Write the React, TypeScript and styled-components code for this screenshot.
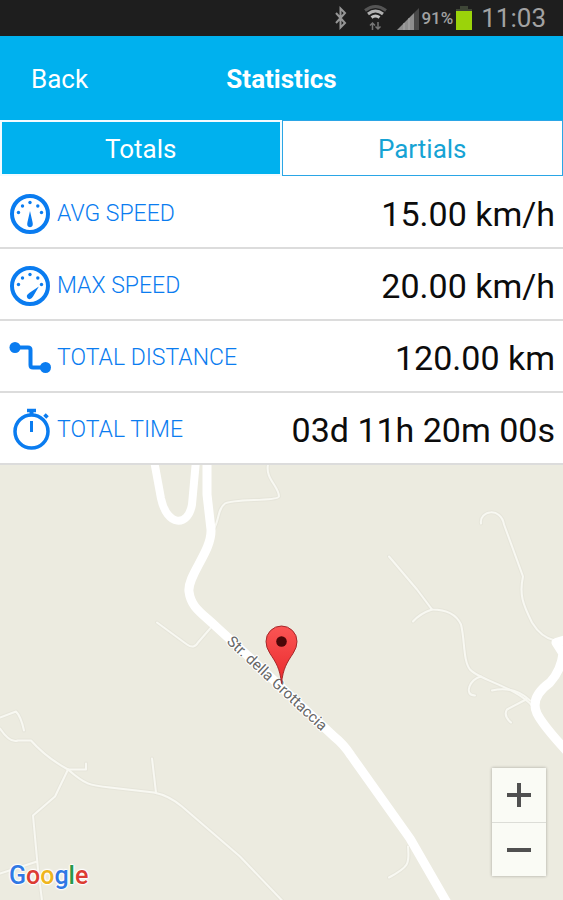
import React, { useState } from "react";
import styled, { createGlobalStyle } from "styled-components";

const SKY = "#00b1ee";
const BLUE = "#0a7cf0";

const GlobalStyle = createGlobalStyle`
  *, *::before, *::after { box-sizing: border-box; }
  html, body, #root { height: 100%; }
  body { margin: 0; font-family: Roboto, "Noto Sans", sans-serif; background: #fff; }
  button { font: inherit; margin: 0; padding: 0; border: 0; cursor: pointer; }
`;

const Screen = styled.div`
  display: flex;
  flex-direction: column;
  min-height: 100%;
`;

const StatusBar = styled.div`
  display: flex;
  align-items: center;
  justify-content: flex-end;
  height: 36px;
  padding-right: 17px;
  background: #1e1e1e;
  color: #a2a2a2;
`;

const StatusIcons = styled.svg`
  display: block;
  width: 92px;
  height: 36px;
`;

const Percent = styled.span`
  font-size: 17px;
  line-height: 36px;
  font-weight: 500;
  margin-left: 2px;
`;

const Battery = styled.svg`
  display: block;
  width: 18px;
  height: 36px;
  margin-left: 2px;
`;

const Clock = styled.time`
  font-size: 26px;
  line-height: 36px;
  margin-left: 8px;
`;

const Header = styled.header`
  display: grid;
  grid-template-columns: 1fr auto 1fr;
  align-items: center;
  height: 84px;
  padding: 2px 31px 0;
  background: ${SKY};
  color: #fff;
`;

const BackButton = styled.button`
  justify-self: start;
  background: none;
  color: #fff;
  font-size: 26px;
  line-height: 32px;
`;

const Title = styled.h1`
  margin: 0;
  font-size: 26px;
  line-height: 32px;
  font-weight: 700;
`;

const Tabs = styled.div`
  display: grid;
  grid-template-columns: 1fr 1fr;
  height: 56px;
  margin-bottom: 1px;
`;

const Tab = styled.button<{ $active: boolean }>`
  font-size: 26px;
  line-height: 32px;
  padding-top: 2px;
  background: ${(p) => (p.$active ? SKY : "#fff")};
  color: ${(p) => (p.$active ? "#fff" : "#16a3d4")};
  border: ${(p) => (p.$active ? "2px solid #f2fbff" : "1px solid #2aa6e6")};
  outline-offset: -4px;
`;

const StatList = styled.dl`
  margin: 0;
`;

const StatRow = styled.div`
  display: flex;
  align-items: center;
  justify-content: space-between;
  height: 72px;
  padding: 3px 8px 0;
  border-bottom: 2px solid #dcdcdc;
  background: #fff;
`;

const StatLabel = styled.dt`
  display: flex;
  align-items: center;
  gap: 5px;
  color: ${BLUE};
  font-size: 23px;
  line-height: 28px;
  font-weight: 300;
`;

const StatIcon = styled.svg`
  display: block;
  width: 44px;
  height: 44px;
`;

const StatValue = styled.dd`
  margin: 0;
  color: #0c0c0c;
  font-size: 34px;
  line-height: 40px;
`;

const MapArea = styled.section`
  position: relative;
  flex: 1 1 auto;
  min-height: 400px;
  background: #ecebe0;
  overflow: hidden;
`;

const MapDrawing = styled.svg`
  position: absolute;
  inset: 0;
  width: 100%;
  height: 100%;
`;

const ZoomControl = styled.div`
  position: absolute;
  right: 17px;
  bottom: 24px;
  display: grid;
  grid-template-rows: 1fr 1fr;
  width: 54px;
  height: 108px;
  background: #fafbf5;
  box-shadow: 0 0 3px rgba(0, 0, 0, 0.3);
`;

const ZoomButton = styled.button`
  display: grid;
  place-items: center;
  background: none;
  & + & { border-top: 1px solid #dcddd7; }
`;

const Wordmark = styled.a`
  position: absolute;
  left: 9px;
  bottom: 8px;
  font-size: 25px;
  line-height: 32px;
  font-weight: 500;
  text-decoration: none;
  text-shadow: 1px 0 1px #fff, -1px 0 1px #fff, 0 1px 1px #fff, 0 -1px 1px #fff, 0 0 3px #fff;
`;

const Letter = styled.span<{ $color: string }>`
  color: ${(p) => p.$color};
`;

function Gauge({ angle }: { angle: number }) {
  return (
    <StatIcon viewBox="0 0 44 44" aria-hidden="true" fill={BLUE}>
      <circle cx="22" cy="22" r="18" fill="none" stroke={BLUE} strokeWidth="4" />
      <circle cx="10.5" cy="20.5" r="1.7" />
      <circle cx="14.5" cy="14" r="1.7" />
      <circle cx="22" cy="10.5" r="1.7" />
      <circle cx="29.8" cy="14" r="1.7" />
      <circle cx="33.5" cy="20.5" r="1.7" />
      <path d="M22 19L24.500 30Q25.800 35 22 35.300Q18.200 35 19.500 30Z" transform={`rotate(${angle} 22 32)`} />
    </StatIcon>
  );
}

function RouteIcon() {
  return (
    <StatIcon viewBox="0 0 44 44" aria-hidden="true" fill={BLUE}>
      <path d="M7 11.500H20Q22.500 11.500 22.500 14V29Q22.500 31.500 25 31.500H38" fill="none" stroke={BLUE} strokeWidth="4" />
      <circle cx="7" cy="11.500" r="5.500" />
      <circle cx="37.500" cy="31.500" r="5.500" />
    </StatIcon>
  );
}

function StopwatchIcon() {
  return (
    <StatIcon viewBox="0 0 44 44" aria-hidden="true" fill="none" stroke={BLUE}>
      <circle cx="23.500" cy="23.500" r="16.500" strokeWidth="3.500" />
      <path d="M19 2.500H28" strokeWidth="3.500" />
      <path d="M23.500 3V7" strokeWidth="4" />
      <path d="M36.500 6.500L39.500 9.500" strokeWidth="3.500" />
      <path d="M23.500 13V24" strokeWidth="3" />
    </StatIcon>
  );
}

const stats = [
  { label: "AVG SPEED", value: "15.00 km/h", icon: <Gauge angle={0} /> },
  { label: "MAX SPEED", value: "20.00 km/h", icon: <Gauge angle={43} /> },
  { label: "TOTAL DISTANCE", value: "120.00 km", icon: <RouteIcon /> },
  { label: "TOTAL TIME", value: "03d 11h 20m 00s", icon: <StopwatchIcon /> },
];

const paths = [
  "M268 0C265 14 279 22 279 32C277 37 234 34 225 39C217 45 220 55 213 66",
  "M157 158L187 180Q194 185 198 178L211 163",
  "M389 92L417 125L432 145Q454 145 461 160C465 176 463 196 470 205C480 216 515 222 532 241",
  "M432 145Q420 149 413 157",
  "M481 212C470 214 463 231 475 231",
  "M492 226Q514 221 530 236M526 235L507 245Q503 251 511 258",
  "M481 59C479 46 501 42 504 60L523 112C519 130 523 140 532 158Q541 173 555 176",
  "M0 253L16 247Q21 252 24 266",
  "M0 264Q10 279 18 276H31Q46 293 68 305C85 320 90 321 110 323L154 328Q169 331 182 342L240 392L282 436",
  "M68 305H86V299M152 294L156 328",
  "M68 305L55 332L33 351L38 405L42 436M0 409L37 397",
  "M408 382C409 398 411 401 389 413",
];

function StreetMap() {
  return (
    <MapDrawing viewBox="0 0 563 436" preserveAspectRatio="xMidYMid slice" role="img" aria-label="Map of the route">
      <defs>
        <linearGradient id="pinFill" x1="0" y1="0" x2="0" y2="1">
          <stop offset="0" stopColor="#fb5554" />
          <stop offset="1" stopColor="#e9292c" />
        </linearGradient>
      </defs>
      <g fill="none" strokeLinecap="round" strokeLinejoin="round">
        {paths.map((d) => (
          <path key={d} d={d} stroke="#e6e5da" strokeWidth="4" />
        ))}
        {paths.map((d) => (
          <path key={d} d={d} stroke="#f8f8f2" strokeWidth="2" />
        ))}
        <g stroke="#fff">
          <path d="M154 -4L161 34C167 62 188 63 192 40L196 -4" strokeWidth="8" />
          <path d="M207 -4V30L211 65C212 87 187 111 189 127C191 143 201 148 217 163L240 184L334 272Q344 280 351 291L410 374L448 440" strokeWidth="9" />
          <path d="M570 174L556 178L563 189Q561 206 550 218C539 226 531 236 537 249Q543 261 568 288" strokeWidth="9" />
        </g>
      </g>
      <text
        transform="translate(226 178) rotate(43)"
        fontFamily="Roboto, sans-serif"
        fontSize="15"
        fill="#666"
        stroke="#fff"
        strokeWidth="2"
        paintOrder="stroke"
      >
        Str. della Grottaccia
      </text>
      <path
        d="M281.500 219C280 204 276 198 270 189Q266 183 266 177A15.500 15.500 0 0 1 297 177Q297 183 293 189C287 198 283 204 281.500 219Z"
        fill="url(#pinFill)"
        stroke="#a5282b"
        strokeWidth="1"
      />
      <circle cx="281.500" cy="177" r="5.300" fill="#4c0708" />
    </MapDrawing>
  );
}

export default function App() {
  const [tab, setTab] = useState("Totals");
  return (
    <>
      <GlobalStyle />
      <Screen>
        <StatusBar>
          <StatusIcons viewBox="0 0 92 36" aria-hidden="true" fill="none" stroke="#969696">
            <path d="M9 13L18 23L13.500 27.500V8.500L18 13L9 23" strokeWidth="2" />
            <g strokeWidth="3">
              <path d="M38 10.500Q48.500 2.500 59 10.500" stroke="#555" />
              <path d="M41 14Q48.500 8 56 14" stroke="#b0b0b0" />
              <path d="M44.500 17.500Q48.500 14.500 52.500 17.500" stroke="#c0c0c0" />
            </g>
            <path d="M45.500 30V23M43 25.500L45.500 23L48 25.500M51 22V29M48.500 26.500L51 29L53.500 26.500" stroke="#777" strokeWidth="1.500" />
            <path d="M70 30L87 13V30Z" fill="#8e8e8e" stroke="none" />
            <path d="M87 13L92 8V30H87Z" fill="#484848" stroke="none" />
            <path d="M77 23V30M82 18V30" stroke="#aaa" />
          </StatusIcons>
          <Percent>91%</Percent>
          <Battery viewBox="0 0 18 36" aria-hidden="true">
            <path d="M5 6H13V9H17V30H1V9H5Z" fill="#3e4637" />
            <rect x="1" y="11" width="16" height="19" fill="#9bd30a" />
          </Battery>
          <Clock>11:03</Clock>
        </StatusBar>
        <Header>
          <BackButton type="button">Back</BackButton>
          <Title>Statistics</Title>
        </Header>
        <Tabs role="tablist">
          {["Totals", "Partials"].map((name) => (
            <Tab
              key={name}
              type="button"
              role="tab"
              aria-selected={tab === name}
              $active={tab === name}
              onClick={() => setTab(name)}
            >
              {name}
            </Tab>
          ))}
        </Tabs>
        <StatList>
          {stats.map((s) => (
            <StatRow key={s.label}>
              <StatLabel>
                {s.icon}
                {s.label}
              </StatLabel>
              <StatValue>{s.value}</StatValue>
            </StatRow>
          ))}
        </StatList>
        <MapArea>
          <StreetMap />
          <Wordmark href="#google" aria-label="Google">
            <Letter $color="#3079e4">G</Letter>
            <Letter $color="#dc3c33">o</Letter>
            <Letter $color="#efb51d">o</Letter>
            <Letter $color="#3079e4">g</Letter>
            <Letter $color="#27984a">l</Letter>
            <Letter $color="#dc3c33">e</Letter>
          </Wordmark>
          <ZoomControl>
            <ZoomButton type="button" aria-label="Zoom in">
              <svg width="24" height="24" viewBox="0 0 24 24" aria-hidden="true">
                <path d="M0 12H24M12 0V24" stroke="#505050" strokeWidth="4" />
              </svg>
            </ZoomButton>
            <ZoomButton type="button" aria-label="Zoom out">
              <svg width="24" height="24" viewBox="0 0 24 24" aria-hidden="true">
                <path d="M0 12H24" stroke="#505050" strokeWidth="4" />
              </svg>
            </ZoomButton>
          </ZoomControl>
        </MapArea>
      </Screen>
    </>
  );
}
